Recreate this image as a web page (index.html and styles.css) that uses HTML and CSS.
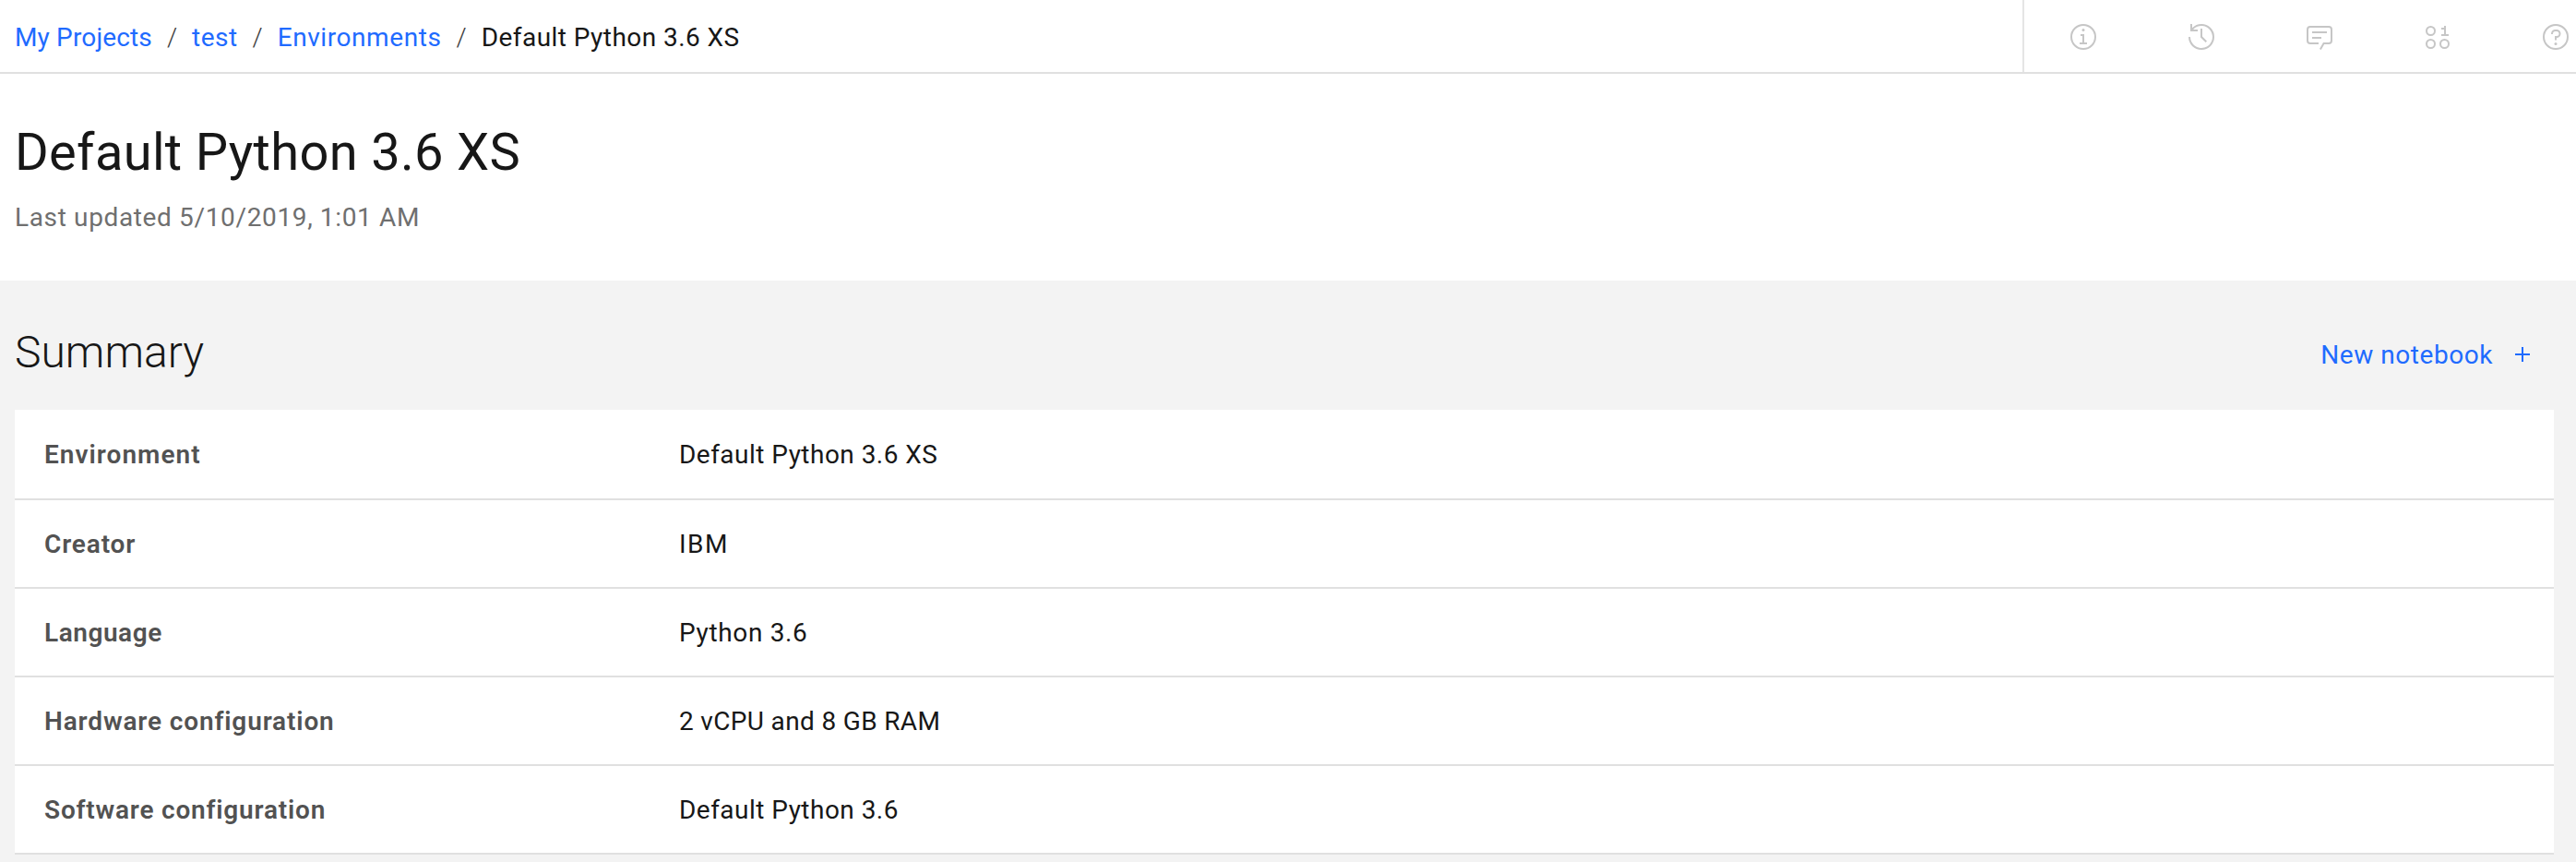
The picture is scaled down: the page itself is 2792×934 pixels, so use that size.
FILE: index.html
```html
<!DOCTYPE html>
<html lang="en">
<head>
    <meta charset="UTF-8">
    <meta name="viewport" content="width=device-width, initial-scale=1.0">
    <title>Default Python 3.6 XS</title>
    <link rel="stylesheet" href="styles.css">
</head>
<body>
    <header class="toolbar">
        <nav class="breadcrumb">
            <a class="breadcrumb__projects" href="#">My Projects</a>
            <span class="breadcrumb__slash">/</span>
            <a class="breadcrumb__test" href="#">test</a>
            <span class="breadcrumb__slash">/</span>
            <a class="breadcrumb__environments" href="#">Environments</a>
            <span class="breadcrumb__slash">/</span>
            <span class="breadcrumb__current">Default Python 3.6 XS</span>
        </nav>
        <div class="toolbar__actions">
            <button class="toolbar__button" aria-label="Information">
                <svg viewBox="0 0 32 32">
                    <circle class="ring" cx="16" cy="16" r="13"/>
                    <path d="M17 22v-9h-4v2h2v7h-3v2h8v-2z"/>
                    <circle cx="16" cy="8.5" r="1.5"/>
                </svg>
            </button>
            <button class="toolbar__button" aria-label="History">
                <svg viewBox="0 0 32 32">
                    <path d="M20.6 22L15 16.4V7h2v8.6l5 5z"/>
                    <path d="M16 2A13.94 13.94 0 0 0 6 6.23V2H4v8h8V8H7.08A12 12 0 1 1 4 16H2A14 14 0 1 0 16 2z"/>
                </svg>
            </button>
            <button class="toolbar__button" aria-label="Comments">
                <svg viewBox="0 0 32 32">
                    <path d="M17.74 30L16 29l4-7h6a2 2 0 0 0 2-2V8a2 2 0 0 0-2-2H6a2 2 0 0 0-2 2v12a2 2 0 0 0 2 2h9v2H6a4 4 0 0 1-4-4V8a4 4 0 0 1 4-4h20a4 4 0 0 1 4 4v12a4 4 0 0 1-4 4h-4.84z"/>
                    <path d="M8 10h16v2H8zM8 16h10v2H8z"/>
                </svg>
            </button>
            <button class="toolbar__button" aria-label="Data">
                <svg viewBox="0 0 32 32">
                    <circle class="ring" cx="8.5" cy="9.5" r="4.5"/>
                    <circle class="ring" cx="8.5" cy="23.5" r="4.5"/>
                    <circle class="ring" cx="23.5" cy="23.5" r="4.5"/>
                    <path d="M25 13V4h-2v2h-3v2h3v5h-3v2h8v-2z"/>
                </svg>
            </button>
            <button class="toolbar__button" aria-label="Help">
                <svg viewBox="0 0 32 32">
                    <circle class="ring" cx="16" cy="16" r="13"/>
                    <path d="M17 8h-1.5a4.49 4.49 0 0 0-4.5 4.5v.5h2v-.5a2.5 2.5 0 0 1 2.5-2.5H17a2.5 2.5 0 0 1 0 5h-2v4.5h2V17a4.5 4.5 0 0 0 0-9z"/>
                    <circle cx="16" cy="23.5" r="1.5"/>
                </svg>
            </button>
        </div>
    </header>

    <section class="heading">
        <h1 class="heading__title">Default Python 3.6 XS</h1>
        <p class="heading__updated">Last updated 5/10/2019, 1:01 AM</p>
    </section>

    <main class="summary">
        <div class="summary__header">
            <h2 class="summary__title">Summary</h2>
            <a class="summary__new" href="#">
                New notebook
                <svg viewBox="0 0 16 16"><path d="M7 0h2v7h7v2H9v7H7V9H0V7h7z"/></svg>
            </a>
        </div>
        <dl class="details">
            <div class="details__row">
                <dt class="details__label details__label--wide">Environment</dt>
                <dd class="details__value">Default Python 3.6 XS</dd>
            </div>
            <div class="details__row">
                <dt class="details__label">Creator</dt>
                <dd class="details__value details__value--creator">IBM</dd>
            </div>
            <div class="details__row">
                <dt class="details__label details__label--language">Language</dt>
                <dd class="details__value details__value--language">Python 3.6</dd>
            </div>
            <div class="details__row">
                <dt class="details__label">Hardware configuration</dt>
                <dd class="details__value details__value--hardware">2 vCPU and 8 GB RAM</dd>
            </div>
            <div class="details__row">
                <dt class="details__label details__label--software">Software configuration</dt>
                <dd class="details__value">Default Python 3.6</dd>
            </div>
        </dl>
    </main>
</body>
</html>
```
FILE: styles.css
```css
* {
    box-sizing: border-box;
}

body {
    margin: 0;
    height: 100vh;
    display: flex;
    flex-direction: column;
    overflow: hidden;
    font-family: Roboto, sans-serif;
    font-size: 28px;
    color: #171717;
    background-color: #fff;
}

h1, h2, p, dl, dd {
    margin: 0;
}

a {
    color: #1f6bff;
    text-decoration: none;
}

/* top bar */
.toolbar {
    display: flex;
    justify-content: space-between;
    height: 80px;
    border-bottom: 2px solid #e0e0e0;
    overflow: hidden;
}

.breadcrumb {
    display: flex;
    align-items: center;
    gap: 16px;
    padding: 3px 0 0 16px;
    white-space: nowrap;
}

.breadcrumb__projects {
    letter-spacing: 0.15px;
}

.breadcrumb__test {
    letter-spacing: 0.45px;
}

.breadcrumb__environments {
    letter-spacing: 0.58px;
}

.breadcrumb__slash {
    color: #3d3d3d;
    font-weight: 300;
}

.breadcrumb__current {
    letter-spacing: 0.45px;
}

.toolbar__actions {
    display: flex;
    width: 600px;
    border-left: 2px solid #e5e5e5;
}

.toolbar__button {
    flex: 0 0 128px;
    display: flex;
    align-items: center;
    justify-content: center;
    padding: 2px 0 0;
    border: none;
    background: none;
    cursor: pointer;
}

.toolbar__button svg {
    width: 32px;
    height: 32px;
    fill: #c6c6c6;
}

.toolbar__button .ring {
    fill: none;
    stroke: #c6c6c6;
    stroke-width: 2;
}

/* page heading */
.heading {
    padding: 49px 16px 48px;
}

.heading__title {
    font-size: 56px;
    font-weight: 400;
    line-height: 72px;
    letter-spacing: 0.33px;
}

.heading__updated {
    margin-top: 15px;
    line-height: 40px;
    letter-spacing: 0.64px;
    color: #6f6f6f;
}

/* summary */
.summary {
    flex: 1;
    padding: 46px 24px 0 16px;
    background-color: #f3f3f3;
}

.summary__header {
    display: flex;
    justify-content: space-between;
    height: 94px;
    padding-right: 26px;
}

.summary__title {
    font-size: 48px;
    font-weight: 300;
    line-height: 64px;
}

.summary__new {
    display: flex;
    align-items: center;
    gap: 24px;
    height: 68px;
    letter-spacing: 0.55px;
}

.summary__new svg {
    width: 16px;
    height: 16px;
    fill: #1f6bff;
}

.details {
    background-color: #fff;
}

.details__row {
    display: flex;
    align-items: center;
    height: 96px;
    border-bottom: 2px solid #e0e0e0;
}

.details__row:first-child {
    height: 98px;
}

.details__label {
    width: 25%;
    padding-left: 32px;
    font-weight: 600;
    letter-spacing: 0.86px;
    color: #525252;
}

.details__label--wide {
    letter-spacing: 1.02px;
}

.details__label--language {
    letter-spacing: 0.55px;
}

.details__label--software {
    letter-spacing: 0.8px;
}

.details__value {
    padding-left: 32px;
    letter-spacing: 0.47px;
}

.details__value--creator {
    letter-spacing: 1.5px;
}

.details__value--language {
    letter-spacing: 0.65px;
}

.details__value--hardware {
    letter-spacing: 0.34px;
}
```
